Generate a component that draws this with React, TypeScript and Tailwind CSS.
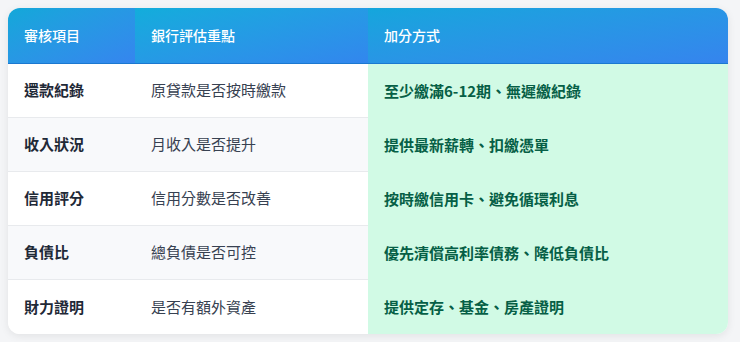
import React from "react";

const rows = [
  ["還款紀錄", "原貸款是否按時繳款", "至少繳滿6-12期、無遲繳紀錄"],
  ["收入狀況", "月收入是否提升", "提供最新薪轉、扣繳憑單"],
  ["信用評分", "信用分數是否改善", "按時繳信用卡、避免循環利息"],
  ["負債比", "總負債是否可控", "優先清償高利率債務、降低負債比"],
  ["財力證明", "是否有額外資產", "提供定存、基金、房產證明"],
];

export default function App() {
  return (
    <div
      className="w-[740px] h-[342px] bg-[#f4f5f7] pt-2 pl-2"
      style={{ fontFamily: '"Noto Sans CJK TC", "Noto Sans", sans-serif' }}
    >
      <div className="w-[720px] rounded-xl overflow-hidden bg-white shadow-[0_2px_8px_rgba(0,0,0,0.08)]">
        <div className="flex h-[56px] border-b border-[#1b78d0] text-white text-[14px] font-medium">
          <div className="w-[127px] flex items-center px-4 bg-gradient-to-br from-[#12a8d9] to-[#3585ef]">審核項目</div>
          <div className="w-[233px] flex items-center px-4 bg-gradient-to-br from-[#12addb] to-[#3286ee]">銀行評估重點</div>
          <div className="flex-1 flex items-center px-4 bg-gradient-to-br from-[#14a6dc] to-[#3584ee]">加分方式</div>
        </div>
        {rows.map((r, i) => (
          <div key={i} className="flex h-[54px] text-[15px]">
            <div
              className={`w-[127px] flex items-center px-4 font-bold text-[#1f2937] ${i % 2 === 1 ? "bg-[#f8f9fb]" : "bg-white"} ${i < rows.length - 1 ? "border-b border-[#e8eaed]" : ""}`}
            >
              {r[0]}
            </div>
            <div
              className={`w-[233px] flex items-center px-4 text-[#374151] ${i % 2 === 1 ? "bg-[#f8f9fb]" : "bg-white"} ${i < rows.length - 1 ? "border-b border-[#e8eaed]" : ""}`}
            >
              {r[1]}
            </div>
            <div className="flex-1 flex items-center px-4 bg-[#d1fae5] text-[#065f46] font-semibold">{r[2]}</div>
          </div>
        ))}
      </div>
    </div>
  );
}
